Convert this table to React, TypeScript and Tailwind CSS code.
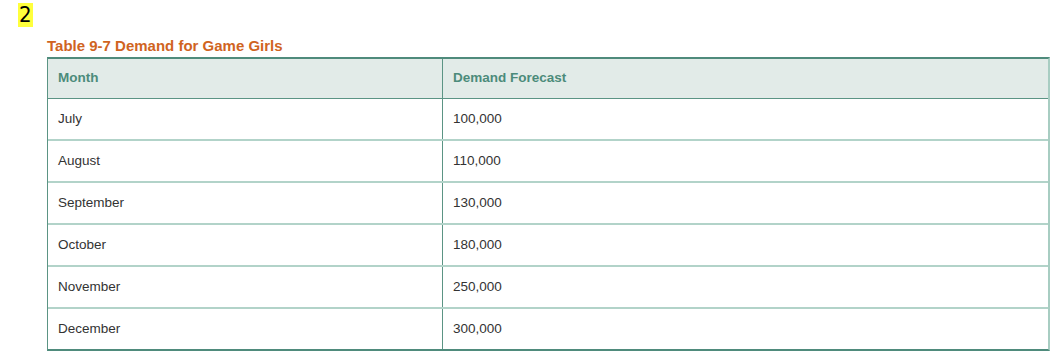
import React from "react";

const rows = [
  ["July", "100,000"],
  ["August", "110,000"],
  ["September", "130,000"],
  ["October", "180,000"],
  ["November", "250,000"],
  ["December", "300,000"],
];

export default function App() {
  return (
    <div className="w-[1060px] h-[357px] bg-white font-['Liberation_Sans',Arial,sans-serif]">
      {/* QUESTION NUMBER */}
      <div className="pt-[3px] pl-[18px]">
        <span className="inline-block bg-[#ffff3c] text-black text-[22px] leading-[24px] px-[1px] font-['DejaVu_Sans_Condensed','DejaVu_Sans',sans-serif]">
          2
        </span>
      </div>
      {/* TABLE */}
      <div className="ml-[47px] mt-[8px] w-[1003px]">
        <div className="text-[#d0641f] font-bold text-[15px] leading-[17px] mb-[3px]">Table 9-7 Demand for Game Girls</div>
        <div className="border-t-2 border-t-[#4f8b7c] border-l border-l-[#5b9484] border-r-2 border-r-[#a8cdc2] border-b-2 border-b-[#4f8b7c]">
          <div className="flex h-[40px] bg-[#e2ebe8] border-b border-b-[#5b9484] text-[#4c8b7b] font-bold text-[13.5px]">
            <div className="w-[395px] border-r border-r-[#5b9484] pl-[10px] flex items-center">Month</div>
            <div className="flex-1 pl-[10px] flex items-center">Demand Forecast</div>
          </div>
          {rows.map(([m, v], i) => (
            <div
              key={m}
              className={
                "flex text-[#333] text-[13.5px] " +
                (i < rows.length - 1 ? "h-[42px] border-b-2 border-b-[#b2d3c9]" : "h-[40px]")
              }
            >
              <div className="w-[395px] border-r border-r-[#5b9484] pl-[10px] flex items-center">{m}</div>
              <div className="flex-1 pl-[10px] flex items-center">{v}</div>
            </div>
          ))}
        </div>
      </div>
    </div>
  );
}
